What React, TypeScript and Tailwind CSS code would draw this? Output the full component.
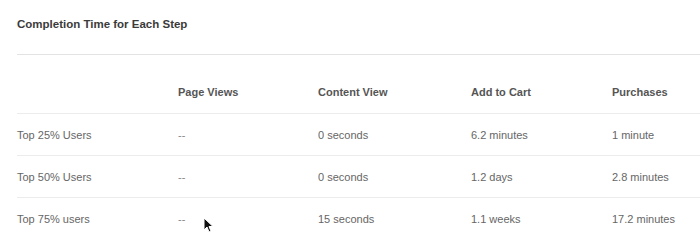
import React from "react";

const COLUMNS = ["", "Page Views", "Content View", "Add to Cart", "Purchases"];

const ROWS = [
  ["Top 25% Users", "--", "0 seconds", "6.2 minutes", "1 minute"],
  ["Top 50% Users", "--", "0 seconds", "1.2 days", "2.8 minutes"],
  ["Top 75% users", "--", "15 seconds", "1.1 weeks", "17.2 minutes"],
];

const grid = "grid grid-cols-[161px_140px_153px_141px_1fr]";

export default function App() {
  return (
    <div className="relative w-[700px] h-[248px] bg-white overflow-hidden font-['Liberation_Sans',Arial,sans-serif] text-[11px] leading-4">
      {/* Title */}
      <div className="ml-[17px] pt-[16px] h-[55px] border-b border-[#e3e3e3]">
        <h2 className="font-bold text-[11.5px] text-[#3b3b3b]">Completion Time for Each Step</h2>
      </div>

      <div className="ml-[17px]">
        {/* Header */}
        <div className={`${grid} h-[59px] items-end pb-[13px] border-b border-[#ececec] font-bold text-[#555]`}>
          {COLUMNS.map((c, i) => (
            <div key={i}>{c}</div>
          ))}
        </div>

        {/* Body */}
        {ROWS.map((row, r) => (
          <div
            key={r}
            className={`${grid} h-[42px] items-center text-[#666] ${
              r < ROWS.length - 1 ? "border-b border-[#ececec]" : ""
            }`}
          >
            {row.map((cell, i) => (
              <div key={i} className={cell === "--" ? "text-[#888]" : ""}>
                {cell}
              </div>
            ))}
          </div>
        ))}
      </div>

      {/* Mouse cursor */}
      <svg className="absolute left-[203px] top-[217px]" width="11" height="16" viewBox="0 0 11 16">
        <path d="M1 1 L1 13 L4 10 L6 15 L8 14 L6 9.5 L10 9.5 Z" fill="#111" stroke="#fff" strokeWidth="1" />
      </svg>
    </div>
  );
}
